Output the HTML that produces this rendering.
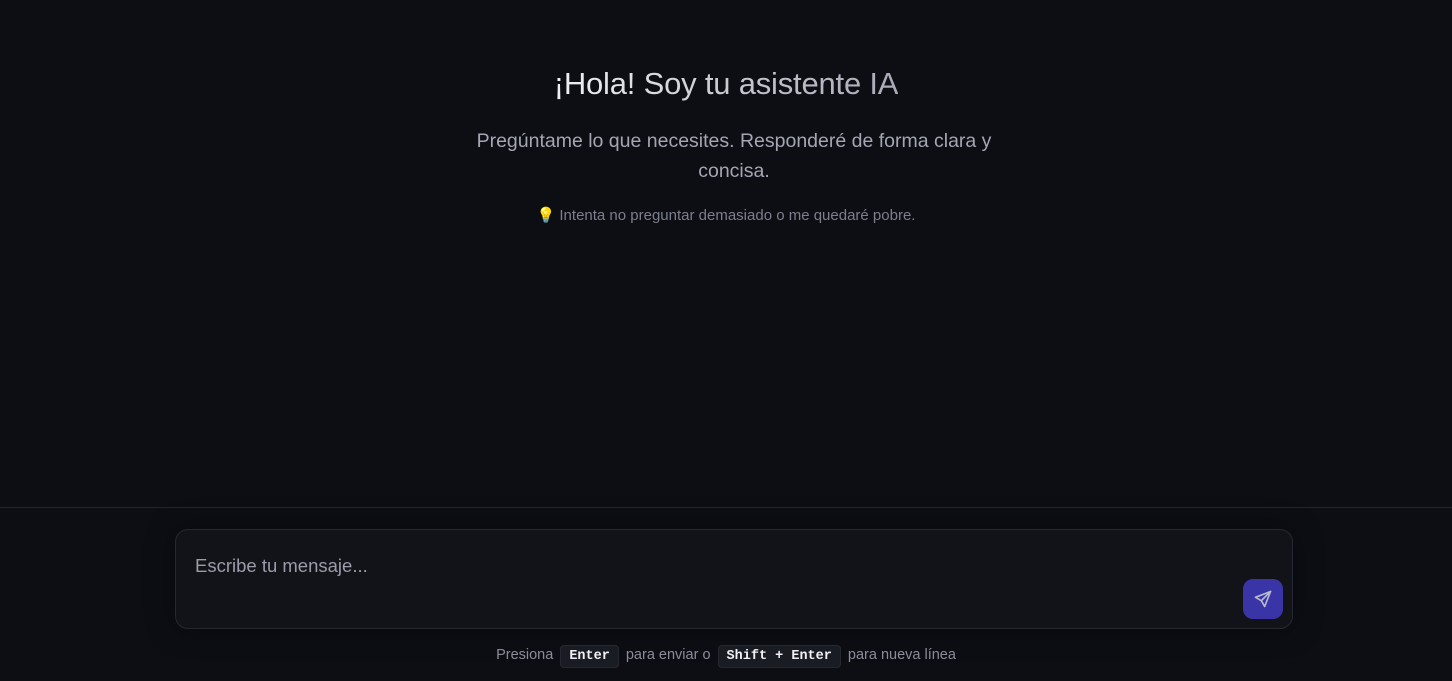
<!DOCTYPE html>
<html><head><meta charset="utf-8"><style>
*{box-sizing:border-box;margin:0;padding:0}
body{width:1452px;height:681px;background:#0d0e14;font-family:"Liberation Sans",sans-serif;position:relative;overflow:hidden}
h1{position:absolute;top:66px;left:0;width:1452px;text-align:center;font-size:31px;font-weight:normal;color:#e2e3ea;letter-spacing:-0.2px}
h1 span{background:linear-gradient(90deg,#f0f0f5,#c0c2cc 60%,#a8aab5);-webkit-background-clip:text;color:transparent}
.sub{position:absolute;top:126px;left:466px;width:536px;text-align:center;font-size:19.5px;line-height:30px;color:#a3a6b3}
.tip{position:absolute;top:206px;left:0;width:1452px;text-align:center;font-size:15px;color:#7c7f8c}
.bar{position:absolute;top:507px;left:0;width:1452px;height:1px;background:#23252e}
.box{position:absolute;left:175px;top:529px;width:1118px;height:100px;border:1px solid #262831;border-radius:13px;background:#121318;box-shadow:0 0 30px rgba(0,0,0,.4)}
.ph{position:absolute;left:19px;top:25px;font-size:18.5px;color:#9a9da9}
.btn{position:absolute;left:1067px;top:49px;width:40px;height:40px;border-radius:10px;background:#3a35a6;display:flex;align-items:center;justify-content:center}
.hint{position:absolute;top:647px;left:0;width:1452px;text-align:center;font-size:14.5px;color:#8a8d99}
kbd{font-family:"Liberation Mono",monospace;font-weight:bold;font-size:13.5px;color:#f0f0f5;background:#1a1c23;border:1px solid #262831;border-radius:4px;padding:3px 8px;margin:0 3px}
</style></head><body>
<h1><span>¡Hola! Soy tu asistente IA</span></h1>
<div class="sub">Pregúntame lo que necesites. Responderé de forma clara y concisa.</div>
<div class="tip"><span style="color:#e6b84a">💡</span> Intenta no preguntar demasiado o me quedaré pobre.</div>
<div class="bar"></div>
<div class="box"><div class="ph">Escribe tu mensaje...</div>
<div class="btn"><svg width="20" height="20" viewBox="0 0 24 24" fill="none" stroke="#b8b9d0" stroke-width="2" stroke-linejoin="round" stroke-linecap="round"><path d="M21 3L10 14"/><path d="M21 3L3 10L10 14L14 21Z"/></svg></div></div>
<div class="hint">Presiona <kbd>Enter</kbd> para enviar o <kbd>Shift + Enter</kbd> para nueva línea</div>
</body></html>
